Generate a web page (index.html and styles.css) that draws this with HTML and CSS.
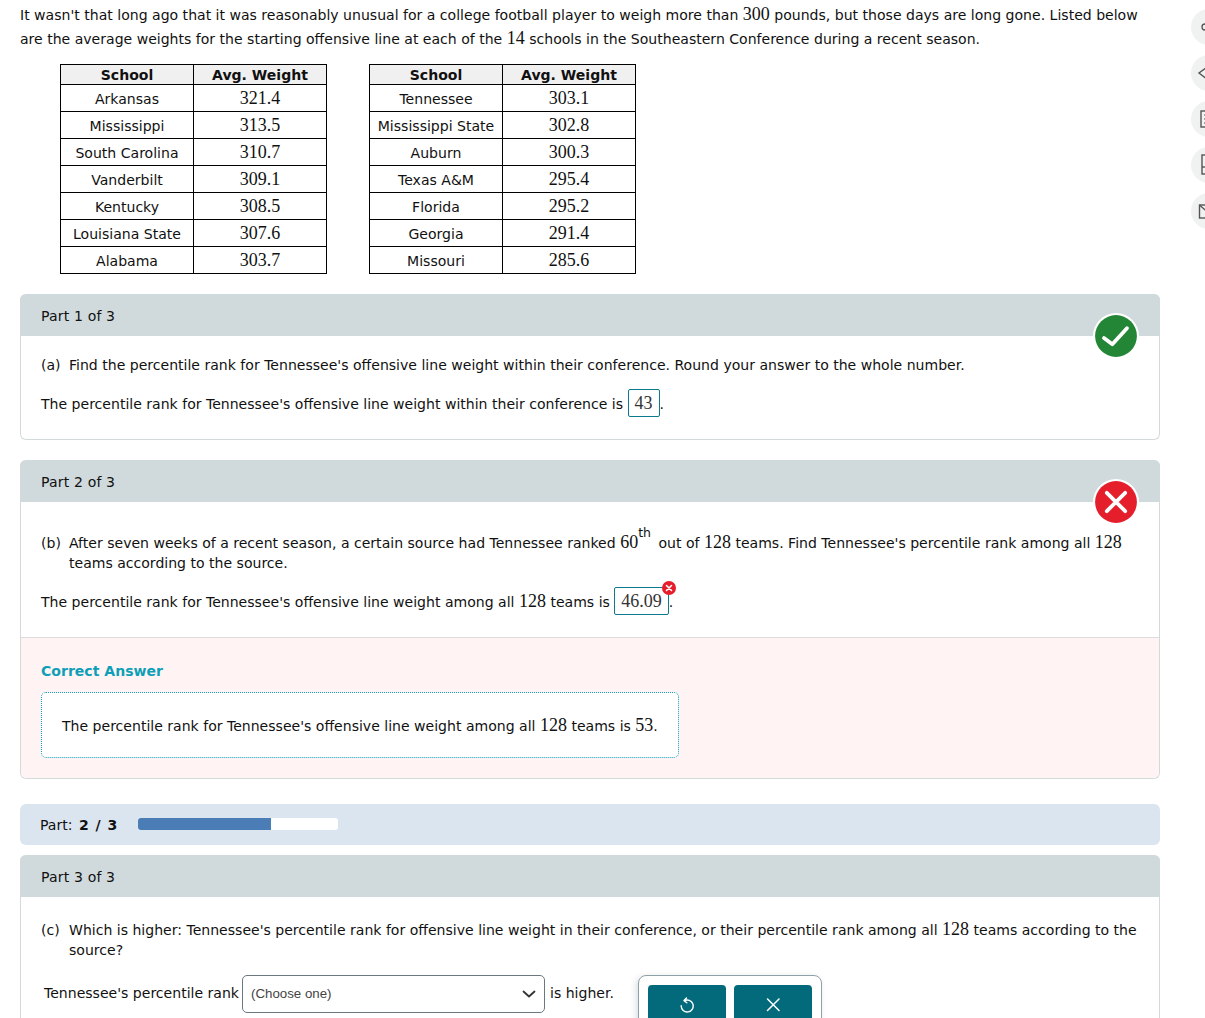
FILE: index.html
```html
<!DOCTYPE html>
<html lang="en">
<head>
<meta charset="utf-8">
<title>Percentile rank</title>
<link rel="stylesheet" href="styles.css">
</head>
<body>
<main class="page">
  <p class="intro">It wasn't that long ago that it was reasonably unusual for a college football player to weigh more than <span class="num">300</span> pounds, but those days are long gone. Listed below are the average weights for the starting offensive line at each of the <span class="num">14</span> schools in the Southeastern Conference during a recent season.</p>
  <div class="tables">
    <table class="data">
      <tr><th>School</th><th>Avg. Weight</th></tr>
      <tr><td>Arkansas</td><td class="num">321.4</td></tr>
      <tr><td>Mississippi</td><td class="num">313.5</td></tr>
      <tr><td>South Carolina</td><td class="num">310.7</td></tr>
      <tr><td>Vanderbilt</td><td class="num">309.1</td></tr>
      <tr><td>Kentucky</td><td class="num">308.5</td></tr>
      <tr><td>Louisiana State</td><td class="num">307.6</td></tr>
      <tr><td>Alabama</td><td class="num">303.7</td></tr>
    </table>
    <table class="data">
      <tr><th>School</th><th>Avg. Weight</th></tr>
      <tr><td>Tennessee</td><td class="num">303.1</td></tr>
      <tr><td>Mississippi State</td><td class="num">302.8</td></tr>
      <tr><td>Auburn</td><td class="num">300.3</td></tr>
      <tr><td>Texas A&amp;M</td><td class="num">295.4</td></tr>
      <tr><td>Florida</td><td class="num">295.2</td></tr>
      <tr><td>Georgia</td><td class="num">291.4</td></tr>
      <tr><td>Missouri</td><td class="num">285.6</td></tr>
    </table>
  </div>

  <section class="part part-one">
    <header class="part-head">Part 1 of 3</header>
    <svg class="badge" viewBox="0 0 44 44" aria-hidden="true"><circle cx="22" cy="22" r="22" fill="#fff"/><circle cx="22" cy="22" r="20" fill="#238636"/><path d="M10.5 24l8 6 14-15.5" fill="none" stroke="#fff" stroke-width="3.6" stroke-linecap="round" stroke-linejoin="round"/></svg>
    <div class="part-body">
      <div class="question"><span class="label">(a)</span><span>Find the percentile rank for Tennessee's offensive line weight within their conference. Round your answer to the whole number.</span></div>
      <div class="answer-line">The percentile rank for Tennessee's offensive line weight within their conference is <span class="answer-box num">43</span>.</div>
    </div>
  </section>

  <section class="part part-two">
    <header class="part-head">Part 2 of 3</header>
    <svg class="badge" viewBox="0 0 44 44" aria-hidden="true"><circle cx="22" cy="22" r="22" fill="#fff"/><circle cx="22" cy="22" r="20" fill="#e41e2b"/><path d="M13.2 13.2l17.6 17.6M30.8 13.2L13.2 30.8" fill="none" stroke="#fff" stroke-width="3.6" stroke-linecap="round"/></svg>
    <div class="part-body part-body-b">
      <div class="question"><span class="label">(b)</span><span>After seven weeks of a recent season, a certain source had Tennessee ranked <span class="num">60</span><sup class="ordinal">th</sup> out of <span class="num">128</span> teams. Find Tennessee's percentile rank among all <span class="num">128</span> teams according to the source.</span></div>
      <div class="answer-line">The percentile rank for Tennessee's offensive line weight among all <span class="num">128</span> teams is <span class="answer-box num wrong">46.09<svg class="wrong-mark" viewBox="0 0 14 14" aria-hidden="true"><circle cx="7" cy="7" r="7" fill="#e41e2b"/><path d="M4.5 4.5l5 5M9.5 4.5l-5 5" stroke="#fff" stroke-width="1.6" stroke-linecap="round"/></svg></span>.</div>
    </div>
    <div class="correct">
      <h3 class="correct-title">Correct Answer</h3>
      <div class="correct-box">The percentile rank for Tennessee's offensive line weight among all <span class="num">128</span> teams is <span class="num">53</span>.</div>
    </div>
  </section>

  <div class="progress">
    <span>Part: <b>2 / 3</b></span>
    <div class="track"><div class="fill" style="width:66.5%"></div></div>
  </div>

  <section class="part part-three">
    <header class="part-head">Part 3 of 3</header>
    <div class="part-body part-body-c">
      <div class="question"><span class="label">(c)</span><span>Which is higher: Tennessee's percentile rank for offensive line weight in their conference, or their percentile rank among all <span class="num">128</span> teams according to the source?</span></div>
      <div class="choose-line">
        <span>Tennessee's percentile rank</span>
        <div class="select"><span>(Choose one)</span><svg class="chev" viewBox="0 0 14 8" aria-hidden="true"><path d="M1.5 1.5L7 6.5l5.5-5" fill="none" stroke="#333" stroke-width="1.8" stroke-linecap="round" stroke-linejoin="round"/></svg></div>
        <span>is higher.</span>
        <div class="tools">
          <button class="tool" type="button" aria-label="Undo"><svg viewBox="0 0 18 18" aria-hidden="true"><path d="M8.5 1L6 3.6l2.8 2.2M6.2 3.8a6 6 0 1 1-3 5" fill="none" stroke="#fff" stroke-width="1.4" stroke-linecap="round" stroke-linejoin="round" transform="translate(0 2)"/></svg></button>
          <button class="tool" type="button" aria-label="Clear"><svg viewBox="0 0 18 18" aria-hidden="true"><path d="M3.5 4l11.5 11.5M15 4L3.5 15.5" fill="none" stroke="#fff" stroke-width="1.5" stroke-linecap="round"/></svg></button>
        </div>
      </div>
    </div>
  </section>
</main>

<nav class="rail" aria-label="Tools">
  <div class="rail-btn"><svg viewBox="0 0 36 36" aria-hidden="true"><circle cx="14" cy="18" r="3" fill="none" stroke="#555" stroke-width="1.3"/></svg></div>
  <div class="rail-btn"><svg viewBox="0 0 36 36" aria-hidden="true"><path d="M16 12l-8 6 8 6" fill="none" stroke="#555" stroke-width="1.4"/></svg></div>
  <div class="rail-btn"><svg viewBox="0 0 36 36" aria-hidden="true"><rect x="10" y="10" width="14" height="16" fill="none" stroke="#555" stroke-width="1.4"/><path d="M13 14h8M13 18h8M13 22h8" stroke="#555" stroke-width="1.2"/></svg></div>
  <div class="rail-btn"><svg viewBox="0 0 36 36" aria-hidden="true"><rect x="11" y="8" width="14" height="19" fill="none" stroke="#555" stroke-width="1.4"/><path d="M11 20h14" stroke="#555" stroke-width="1.4"/></svg></div>
  <div class="rail-btn"><svg viewBox="0 0 36 36" aria-hidden="true"><rect x="8.5" y="12" width="16" height="13" fill="none" stroke="#555" stroke-width="1.4"/><path d="M8.5 12l8 7" stroke="#555" stroke-width="1.4"/></svg></div>
</nav>
</body>
</html>
```
FILE: styles.css
```css
html, body {
  margin: 0;
  height: 1018px;
  overflow: hidden;
  background: #fff;
}
body {
  position: relative;
  font-family: "DejaVu Sans", sans-serif;
  font-size: 14.05px;
  color: #111;
}
.page {
  width: 1140px;
  margin-left: 20px;
}
.num {
  font-family: "Liberation Serif", serif;
  font-size: 18px;
  line-height: 1;
}
.intro {
  margin: 0;
  padding-top: 3px;
  line-height: 24px;
}
.tables {
  display: flex;
  gap: 42px;
  margin: 13px 0 20px 40px;
}
.data {
  border-collapse: collapse;
  width: 267px;
  table-layout: fixed;
}
.data th, .data td {
  border: 1px solid #000;
  padding: 2px 0 0;
  text-align: center;
}
.data th {
  line-height: 17px;
  background: #f0f0f0;
  font-weight: 700;
}
.data td {
  line-height: 24px;
}
.data td.num {
  padding-top: 0;
  line-height: 26px;
}
.part {
  position: relative;
  box-sizing: border-box;
  border: 1px solid #d3dadc;
  border-top: 0;
  border-radius: 6px;
  margin-bottom: 20px;
}
.part-one {
  height: 146px;
}
.part-two {
  height: 319px;
  margin-bottom: 25px;
}
.part-three {
  height: 200px;
  margin-bottom: 0;
}
.part-head {
  margin: 0 -1px;
  height: 42px;
  line-height: 44px;
  padding-left: 21px;
  background: #d0d9dc;
  border-radius: 6px 6px 0 0;
  letter-spacing: 0.15px;
}
.badge {
  position: absolute;
  right: 20px;
  top: 19px;
  width: 46px;
  height: 46px;
}
.part-body {
  padding: 19px 20px 0;
}
.part-body-b {
  box-sizing: border-box;
  height: 135px;
  padding-top: 31px;
}
.part-body-c {
  padding-top: 23px;
}
.question {
  display: flex;
  gap: 7px;
  line-height: 20px;
}
.label {
  flex: none;
  width: 21px;
}
.ordinal {
  font-size: 12.5px;
  line-height: 0;
  position: relative;
  top: -5px;
  margin-right: 3px;
}
.answer-line {
  margin-top: 15px;
  line-height: 28px;
}
.answer-box {
  position: relative;
  top: -2px;
  display: inline-block;
  box-sizing: border-box;
  height: 28px;
  line-height: 27px;
  padding: 0 6px;
  border: 1px solid #0a7a8c;
  border-radius: 2px;
  vertical-align: middle;
  color: #333;
}
.wrong-mark {
  position: absolute;
  right: -8px;
  top: -7px;
  width: 14px;
  height: 14px;
}
.correct {
  box-sizing: border-box;
  height: 141px;
  padding: 24px 20px 0;
  border-top: 1px solid #dcdcdc;
  border-radius: 0 0 6px 6px;
  background: #fff4f3;
}
.correct-title {
  margin: 0;
  font-size: 14.05px;
  line-height: 19px;
  font-weight: 700;
  color: #0d9fb8;
}
.correct-box {
  box-sizing: border-box;
  margin-top: 11px;
  width: 638px;
  height: 66px;
  line-height: 66px;
  padding-left: 20px;
  background: #fff;
  border: 1px dotted #0d9fb8;
  border-radius: 5px;
  white-space: nowrap;
}
.progress {
  display: flex;
  align-items: center;
  gap: 21px;
  height: 41px;
  padding-left: 20px;
  margin-bottom: 10px;
  background: #dae5ef;
  border-radius: 6px;
}
.progress b {
  margin-left: 2px;
  font-weight: 700;
  word-spacing: 2px;
}
.track {
  width: 200px;
  height: 12px;
  margin-top: -2px;
  background: #fff;
  border-radius: 3px;
  overflow: hidden;
}
.fill {
  height: 100%;
  background: #4a7cb5;
}
.choose-line {
  display: flex;
  align-items: flex-start;
  margin-top: 15px;
  padding-left: 3px;
  line-height: 36px;
  white-space: nowrap;
}
.select {
  box-sizing: border-box;
  display: flex;
  align-items: center;
  justify-content: space-between;
  width: 303px;
  height: 38px;
  margin: 0 5px 0 3px;
  padding: 0 8px 0 8px;
  border: 1px solid #6b7880;
  border-radius: 5px;
  font-family: "Liberation Sans", sans-serif;
  font-size: 13.3px;
  color: #444;
}
.chev {
  width: 14px;
  height: 8px;
}
.tools {
  display: flex;
  gap: 8px;
  box-sizing: border-box;
  width: 184px;
  height: 60px;
  margin-left: 24px;
  padding: 9px;
  background: #fff;
  border: 1px solid #8fa1a8;
  border-radius: 8px;
  box-shadow: -2px 2px 6px rgba(0, 40, 50, 0.15);
}
.tool {
  display: flex;
  justify-content: center;
  align-items: flex-start;
  width: 78px;
  height: 44px;
  padding: 10px 0 0;
  border: 0;
  border-radius: 4px;
  background: #036a7b;
}
.tool svg {
  width: 18px;
  height: 18px;
}
.rail {
  position: absolute;
  left: 1191px;
  top: 9px;
  display: flex;
  flex-direction: column;
  gap: 10px;
}
.rail-btn {
  width: 36px;
  height: 36px;
  border-radius: 50%;
  background: #f0f1f1;
}
.rail-btn svg {
  display: block;
  width: 36px;
  height: 36px;
}
```
